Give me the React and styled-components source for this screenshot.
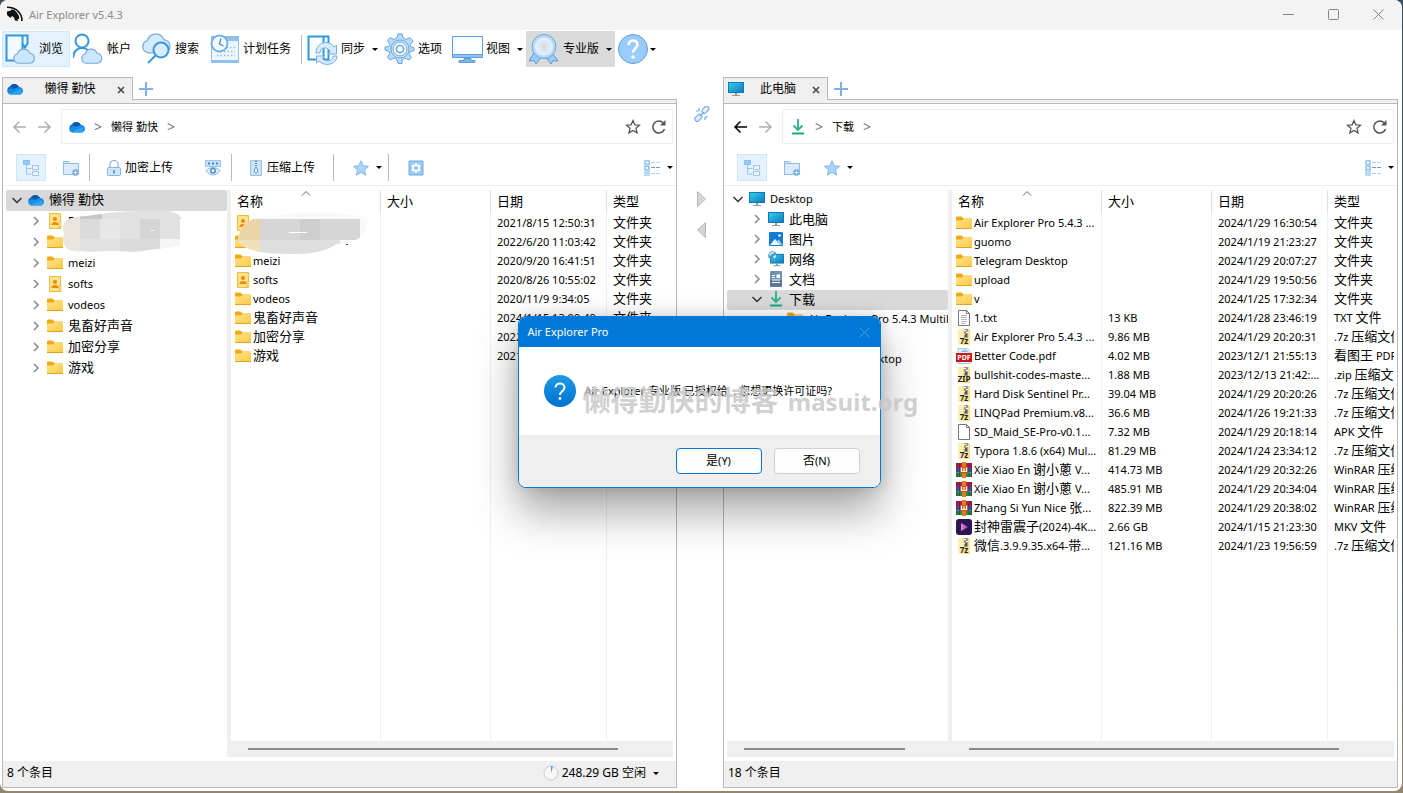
/* eslint-disable react/prop-types */
import React from 'react';
import styled, { createGlobalStyle, css } from 'styled-components';

const leftTree = [
  { name: '懒得 勤快', icon: 'cloud', depth: 0, open: true, active: true },
  { name: 'F', icon: 'shared', depth: 1 },
  { name: '', icon: 'folder', depth: 1 },
  { name: 'meizi', icon: 'folder', depth: 1 },
  { name: 'softs', icon: 'shared', depth: 1 },
  { name: 'vodeos', icon: 'folder', depth: 1 },
  { name: '鬼畜好声音', icon: 'folder', depth: 1 },
  { name: '加密分享', icon: 'folder', depth: 1 },
  { name: '游戏', icon: 'folder', depth: 1 }
];

const rightTree = [
  { name: 'Desktop', icon: 'monitor', depth: 0, open: true },
  { name: '此电脑', icon: 'monitor', depth: 1 },
  { name: '图片', icon: 'picture', depth: 1 },
  { name: '网络', icon: 'network', depth: 1 },
  { name: '文档', icon: 'document', depth: 1 },
  { name: '下载', icon: 'download', depth: 1, open: true, active: true },
  { name: 'Air Explorer Pro 5.4.3 Multilingual', icon: 'folder', depth: 2, leaf: true },
  { name: 'guomo', icon: 'folder', depth: 2, leaf: true },
  { name: 'Telegram Desktop', icon: 'folder', depth: 2, leaf: true }
];

const leftFiles = [
  ['shared', '', '', '2021/8/15 12:50:31', '文件夹'],
  ['folder', '', '', '2022/6/20 11:03:42', '文件夹'],
  ['folder', 'meizi', '', '2020/9/20 16:41:51', '文件夹'],
  ['shared', 'softs', '', '2020/8/26 10:55:02', '文件夹'],
  ['folder', 'vodeos', '', '2020/11/9 9:34:05', '文件夹'],
  ['folder', '鬼畜好声音', '', '2024/1/15 13:09:49', '文件夹'],
  ['folder', '加密分享', '', '2022/1/15 13:09:49', '文件夹'],
  ['folder', '游戏', '', '2021/1/15 13:09:49', '文件夹']
];

const rightFiles = [
  ['folder', 'Air Explorer Pro 5.4.3 ...', '', '2024/1/29 16:30:54', '文件夹'],
  ['folder', 'guomo', '', '2024/1/19 21:23:27', '文件夹'],
  ['folder', 'Telegram Desktop', '', '2024/1/29 20:07:27', '文件夹'],
  ['folder', 'upload', '', '2024/1/29 19:50:56', '文件夹'],
  ['folder', 'v', '', '2024/1/25 17:32:34', '文件夹'],
  ['text', '1.txt', '13 KB', '2024/1/28 23:46:19', 'TXT 文件'],
  ['seven', 'Air Explorer Pro 5.4.3 ...', '9.86 MB', '2024/1/29 20:20:31', '.7z 压缩文件'],
  ['pdf', 'Better Code.pdf', '4.02 MB', '2023/12/1 21:55:13', '看图王 PDF 文件'],
  ['zip', 'bullshit-codes-maste...', '1.88 MB', '2023/12/13 21:42:...', '.zip 压缩文件'],
  ['seven', 'Hard Disk Sentinel Pr...', '39.04 MB', '2024/1/29 20:20:26', '.7z 压缩文件'],
  ['seven', 'LINQPad Premium.v8...', '36.6 MB', '2024/1/26 19:21:33', '.7z 压缩文件'],
  ['blank', 'SD_Maid_SE-Pro-v0.1...', '7.32 MB', '2024/1/29 20:18:14', 'APK 文件'],
  ['seven', 'Typora 1.8.6 (x64) Mul...', '81.29 MB', '2024/1/24 23:34:12', '.7z 压缩文件'],
  ['rar', 'Xie Xiao En 谢小蔥 V...', '414.73 MB', '2024/1/29 20:32:26', 'WinRAR 压缩文件'],
  ['rar', 'Xie Xiao En 谢小蔥 V...', '485.91 MB', '2024/1/29 20:34:04', 'WinRAR 压缩文件'],
  ['rar', 'Zhang Si Yun Nice 张...', '822.39 MB', '2024/1/29 20:38:02', 'WinRAR 压缩文件'],
  ['video', '封神雷震子(2024)-4K...', '2.66 GB', '2024/1/15 21:23:30', 'MKV 文件'],
  ['seven', '微信.3.9.9.35.x64-带...', '121.16 MB', '2024/1/23 19:56:59', '.7z 压缩文件']
];

const Archive = ({ label }) => (
  <>
    <path d="M2 0h12v16H2z" fill="#fbe08a" />
    <path d="M2 0h5v16H2z" fill="#fdeeb4" />
    <path d="M8 0h4v9H8z" fill="#9b9b93" />
    <path d="M8 1h2v1H8zM10 3h2v1h-2zM8 5h2v1H8z" fill="#fff" />
    <path d="M9 5h2v3H9z" fill="#555" />
    <text x="8" y="15" textAnchor="middle" fontSize="8" fontWeight="700" fill="#222">{label}</text>
  </>
);

const Sheet = ({ children }) => (
  <>
    <path d="M2.500.5h8l3 3v12h-11z" fill="#fff" stroke="#777" />
    <path d="M10.500.5v3h3" fill="none" stroke="#777" />
    {children}
  </>
);

const Monitor = () => (
  <>
    <path d="M0 1h16v11H0z" fill="#1177b8" />
    <path d="M1 2h14v9H1z" fill="url(#screen)" />
    <path d="M7 12h2v2H7zM4 14h8v1H4z" fill="#8d99a3" />
  </>
);

const glyphs = {
  cloud: (
    <>
      <path d="M4 13a4 4 0 01-.8-7.800A5 5 0 0112 6l-2 7z" fill="#0f6cc0" />
      <path d="M3.200 5.200A5 5 0 0112 6L8 8z" fill="#0b57ad" />
      <path d="M4 13.500C.8 13.500-.2 11 .8 9.200 2 7.300 4.500 7 6.500 8L12 6a3.800 3.800 0 014 3.800c0 2-1.500 3.700-3.300 3.700z" fill="#1a8ce4" />
      <path d="M3 13.300L13 8l2.500 3.500c-.5 1.300-1.500 2-2.800 2H4z" fill="#2aa5f0" />
    </>
  ),
  folder: (
    <>
      <path d="M0 3c0-1 .5-1.500 1.500-1.500h4L7.500 3.500H15c.7 0 1 .4 1 1V8H0z" fill="#efaa10" />
      <path d="M0 5.500h6L7.500 4H16v9.500H0z" fill="url(#paper)" />
      <path d="M0 13h16v1H0z" fill="#e2a41c" />
    </>
  ),
  shared: (
    <>
      <path d="M2.500.5h11v15h-11z" fill="#fce38a" stroke="#e8bd3a" />
      <path d="M12 9.500h2v5h-2z" fill="#fff0b0" stroke="#d9a520" strokeWidth=".6" />
      <circle cx="8" cy="6" r="2.100" fill="#ef8a10" />
      <path d="M4.300 12c0-4 7.400-4 7.400 0z" fill="#ef8a10" />
    </>
  ),
  monitor: <Monitor />,
  network: (
    <>
      <g transform="translate(2 2) scale(.88)"><Monitor /></g>
      <circle cx="4.500" cy="4.500" r="4.300" fill="#3e9ad0" />
      <path d="M1 3c2-2 4-2.500 5-2 .5 1-1 2-2 2s-1 2-2 2zM5 5l3-1v2L6 8z" fill="#cfe9f7" />
    </>
  ),
  picture: (
    <>
      <rect x="1" y="1" width="14" height="14" rx="1" fill="#167ad0" />
      <path d="M2 14l5-6 5 6z" fill="#fff" />
      <path d="M9 10l1.500-1.500L14 13v1h-2z" fill="#9fd0f5" />
      <circle cx="11.500" cy="4.500" r="1.300" fill="#fff" />
    </>
  ),
  document: (
    <>
      <rect x="2" y="0" width="12" height="16" rx="1" fill="#7390ad" />
      <path d="M2 9h12v6.500H2z" fill="#59789a" />
      <path d="M4 4h3v1H4zM4 6h3v1H4zM8.500 3.500H12V7H8.500zM4 8.500h8v1H4zM4 11h8v1H4z" fill="#fff" />
    </>
  ),
  download: (
    <>
      <path d="M8 0v11M3.500 6.500L8 11l4.500-4.500" fill="none" stroke="#25b28c" strokeWidth="1.800" />
      <path d="M2 13.500h12v2H2z" fill="#18a884" />
    </>
  ),
  text: <Sheet><path d="M5 5.500h6M5 7.500h6M5 9.500h6M5 11.500h6M5 13.500h4" stroke="#aaa" strokeWidth=".8" /></Sheet>,
  blank: <Sheet />,
  seven: <Archive label="7z" />,
  zip: <Archive label="ZIP" />,
  pdf: (
    <>
      <path d="M2 .5h9l3 3v12H2z" fill="#e5f2fb" stroke="#8db7d3" strokeWidth=".8" />
      <path d="M5 4c2-3 6-3 7 0z" fill="#84c2e8" />
      <rect x="0" y="5" width="16" height="9" fill="#c4161c" />
      <text x="8" y="12" textAnchor="middle" fontSize="7" fontWeight="700" fill="#fff">PDF</text>
    </>
  ),
  rar: (
    <>
      <path d="M0 1h16v5H0z" fill="#b51f3f" />
      <path d="M0 6h16v4.500H0z" fill="#4a51b0" />
      <path d="M0 10.500h16V15H0z" fill="#2a8b46" />
      <path d="M1 1v14M3.500 1v14M13 1v14M15.500 1v14" stroke="#211b30" strokeWidth=".5" />
      <path d="M6 0h4v16H6z" fill="#e37a20" />
      <path d="M4 5h8v6H4z" fill="#c25318" />
      <path d="M5.500 5.500v4h5v-4M8 6v3.500" fill="none" stroke="#fff" strokeWidth="1.200" />
    </>
  ),
  video: (
    <>
      <rect width="16" height="16" rx="3" fill="#2c1650" />
      <path d="M5 4l7 4-7 4z" fill="url(#play)" />
    </>
  ),
  treeView: (
    <g fill="none" stroke="#9cc5e8">
      <path d="M3.500 5v9h5M3.500 8.500h5" />
      <path d="M.5.500h6v4h-6z" fill="#93c8f8" stroke="#8abdec" />
      <path d="M9.500 5.500h6v4h-6zM9.500 11.500h6v4h-6z" fill="#eef6fe" />
    </g>
  ),
  newFolder: (
    <g stroke="#8bbbe6">
      <path d="M.5 1.500h5l1.500 2h8.500v11H.5z" fill="#d9ecfd" />
      <path d="M.5 3.500H7" />
      <circle cx="12.500" cy="12.500" r="3" fill="#5ba3e3" stroke="#8bbbe6" />
      <path d="M10.500 12.500h4M12.500 10.500v4" stroke="#fff" />
    </g>
  ),
  lock: (
    <g fill="none" stroke="#86b4df">
      <path d="M4 7V4.500a4 4 0 018 0V7" strokeWidth="1.200" />
      <rect x="1.500" y="7.500" width="13" height="8" rx="1" fill="#cfe6fb" />
      <path d="M8 10v3.500" stroke="#4485c4" strokeWidth="1.500" />
    </g>
  ),
  eye: (
    <>
      <rect x=".5" y=".5" width="15" height="6" fill="#c6e1f9" stroke="#9cc5e8" />
      <path d="M3 2.500h2v2H3zM7 2.500h2v2H7zM11 2.500h2v2h-2z" fill="#3f83c4" />
      <path d="M1 10.500c4-4 10-4 14 0-3 6-11 6-14 0z" fill="#dceefd" stroke="#8bbbe6" />
      <circle cx="8" cy="10.800" r="2.200" fill="#fff" stroke="#4a8ccc" strokeWidth="1.500" />
    </>
  ),
  zipper: (
    <>
      <path d="M2.500.5h11v15h-11z" fill="#cbe4fa" stroke="#98c2e8" />
      <path d="M8 1v8" stroke="#5b98d0" strokeWidth="2" strokeDasharray="1 1" />
      <rect x="6.500" y="8" width="3" height="5" rx="1.500" fill="#fff" stroke="#5b98d0" />
    </>
  ),
  starBlue: <path d="M8 .8l2.200 5 5.300.5-4 3.600 1.200 5.300L8 12.400l-4.700 2.800 1.200-5.300-4-3.600 5.300-.5z" fill="#a9d4fc" stroke="#82b5e8" />,
  gearBox: (
    <>
      <path d="M1 1h14v14H1z" fill="#9ccbf6" stroke="#70a9de" />
      <circle cx="8" cy="8" r="3" fill="none" stroke="#fff" strokeWidth="1.600" />
      <path d="M8 3v2M8 11v2M3.700 5.500l1.700 1M10.600 9.500l1.700 1M3.700 10.500l1.700-1M10.600 6.500l1.700-1" stroke="#fff" strokeWidth="1.600" />
    </>
  ),
  details: (
    <>
      <path d="M0 0h6v16H0z" fill="#b8daf8" />
      <path d="M1 1h4v3H1zM1.500 6.500h3v3h-3z" fill="#fff" stroke="#7caedd" strokeWidth=".8" />
      <path d="M7 2.500h4M12 2.500h4M7 13.500h4M12 13.500h4" stroke="#b6d0e8" />
      <path d="M7 7.500h4M12 7.500h4" stroke="#659ccd" />
    </>
  ),
  back: <path d="M14 8H2M7.500 2.500L2 8l5.500 5.500" fill="none" stroke="currentColor" strokeWidth="1.500" />,
  forward: <path d="M2 8h12M8.500 2.500L14 8l-5.500 5.500" fill="none" stroke="currentColor" strokeWidth="1.500" />,
  star: <path d="M8 1.500l1.900 4.300 4.700.4-3.600 3.100 1.100 4.600L8 11.500l-4.100 2.400L5 9.300 1.400 6.200l4.700-.4z" fill="none" stroke="#555" strokeWidth="1.300" />,
  refresh: (
    <>
      <path d="M13.500 10A6 6 0 1112.300 4" fill="none" stroke="#555" strokeWidth="1.600" />
      <path d="M14.500 1v5.500H9z" fill="#555" />
    </>
  ),
  link: (
    <g fill="#e3f1fe" stroke="#79ace0" strokeWidth="1.200">
      <rect x="7.500" y="1.500" width="8" height="4.600" rx="2.300" transform="rotate(-45 11.500 4)" />
      <rect x=".5" y="9.500" width="8" height="4.600" rx="2.300" transform="rotate(-45 4.500 12)" />
      <path d="M6 10l4-4M5 2v3M2 5h3M11 11v3M11 11h3" />
    </g>
  )
};

const cloudPath = 'M7 15a5 5 0 01-.5-9.700A6.500 6.500 0 0119 4.500 5.300 5.300 0 0119.500 15z';

const bigGlyphs = {
  browse: (
    <>
      <path d="M1.500 2.500h16v25h-16zM17.500 2.500h5v8l-2.500 4-2.500-4z" fill="#f3f9ff" stroke="#3297dc" strokeWidth="2" />
      <path d={cloudPath} transform="translate(6 16) scale(.98 .95)" fill="#cde6fc" stroke="#77aede" strokeWidth="1.200" />
    </>
  ),
  account: (
    <>
      <circle cx="9" cy="8" r="6.500" fill="none" stroke="#3297dc" strokeWidth="2" />
      <path d="M0 25c0-6 4-10 9-10s6 2 7 4" fill="none" stroke="#3297dc" strokeWidth="2" />
      <path d={cloudPath} transform="translate(6 16) scale(.95)" fill="#cde6fc" stroke="#77aede" strokeWidth="1.200" />
    </>
  ),
  search: (
    <>
      <path d={cloudPath} transform="translate(-2 1) scale(1.300 1.250)" fill="#d4eafd" stroke="#77aede" />
      <circle cx="20" cy="17" r="7.500" fill="#d8ecfe" stroke="#3c98dc" strokeWidth="2" />
      <path d="M14.500 22.500L7 30" stroke="#3c98dc" strokeWidth="2" />
    </>
  ),
  schedule: (
    <>
      <rect x="2.500" y="3.500" width="27" height="26" rx="1" fill="#edf6fe" stroke="#90bfe8" />
      <path d="M2 3h28v5H2zM2 27h28v3H2z" fill="#8fc0ee" />
      <path d="M14 14.500h12M8 18.500h18M8 22.500h18" stroke="#8fbce6" strokeWidth="1.500" strokeDasharray="1.500 2" />
      <circle cx="10.500" cy="10.500" r="8" fill="#f5faff" stroke="#76aee3" strokeWidth="2" />
      <path d="M12 5.500L10.500 11l4 2" fill="none" stroke="#3d8fd4" strokeWidth="1.300" />
    </>
  ),
  // the two arrows turn in front of the notebook
  sync: (
    <>
      <path d="M1.500 3.500h20v23h-20zM16.500 3.500v23" fill="#f8fcff" stroke="#3297dc" strokeWidth="2" />
      <g fill="#d7ebfd" stroke="#76aee0" strokeLinejoin="round">
        <path d="M9 20c0-11 13-14 18-6l2.500-1.500V21H21l2.500-2.500C20 13 13 14 13 20z" />
        <path d="M30 23c0 9-13 11-18 5l-2.500 2v-7H18l-3 2.500c4 4 11 3 11-2.500z" />
      </g>
    </>
  ),
  options: (
    <g stroke="#66a5dc">
      <path d="M14 1h4l1 4 3 1.500 4-2 3 3.500-3 4 1 2 3 .5v3l-4 1.500-1 2 2.500 3.500L25 27l-4-2-2.500 1.500-.5 4h-4l-1-4L10 25l-4 2-2.500-3L6 20.500l-1-2L1 17v-3l4-.5 1-2-2.500-4L6 4.500l4 2L13 5z" fill="#b9dcfa" />
      <circle cx="16" cy="16" r="9" fill="#d8ecfd" />
      <circle cx="16" cy="16" r="7" fill="#eff7ff" />
      <circle cx="16" cy="16" r="3.500" fill="#fff" strokeWidth="1.500" />
    </g>
  ),
  view: (
    <>
      <path d="M.5 3.500h30v21H.5z" fill="#fbfdff" stroke="#5f9ed8" />
      <path d="M.5 21.500h30v3H.5z" fill="#8ec3f5" stroke="#5f9ed8" />
      <path d="M12 25.500h7v2h4v2H7v-2h5z" fill="#7db6ec" stroke="#5f9ed8" />
    </>
  ),
  pro: (
    <>
      <path d="M6 18L0 28l5-.5L7 31l6-8zM22 18l7 10-5-.5L22 31l-6-8z" fill="#9acaf6" stroke="#5c9cd8" />
      <circle cx="15" cy="13.500" r="12" fill="#b7dcfb" stroke="#68a6de" />
      <circle cx="15" cy="13.500" r="9.500" fill="url(#medal)" stroke="#9fc9ee" strokeWidth=".5" />
    </>
  ),
  help: (
    <>
      <circle cx="15" cy="16" r="14.500" fill="#99cbfb" stroke="#639fd9" />
      <path d="M10.500 12c0-6 9-6 9-.5 0 4-4.500 4-4.500 8" fill="none" stroke="#fff" strokeWidth="2.500" />
      <circle cx="15" cy="24" r="1.800" fill="#fff" />
    </>
  )
};

const Icon = ({ name }) => <svg width="16" height="16" viewBox="0 0 16 16" aria-hidden="true">{glyphs[name]}</svg>;
const BigIcon = ({ name }) => <svg width="32" height="32" viewBox="0 0 32 32" aria-hidden="true">{bigGlyphs[name]}</svg>;
const Chevron = ({ open }) => (
  <svg width="12" height="12" viewBox="0 0 12 12" fill="none" stroke={open ? '#333' : '#888'} strokeWidth="1.500" aria-hidden="true">
    <path d={open ? 'M1.500 4L6 8.500 10.500 4' : 'M4 2l4 4-4 4'} />
  </svg>
);

const Gradients = () => (
  <Defs aria-hidden="true">
    <defs>
      <linearGradient id="paper" x1="0" y1="0" x2="1" y2="1"><stop stopColor="#ffe28c" /><stop offset="1" stopColor="#fccb45" /></linearGradient>
      <linearGradient id="screen" x1="0" y1="0" x2="1" y2="1"><stop stopColor="#2fd0e4" /><stop offset="1" stopColor="#1279c4" /></linearGradient>
      <linearGradient id="play"><stop stopColor="#f57fc0" /><stop offset="1" stopColor="#7d4df0" /></linearGradient>
      <linearGradient id="ask" x1="0" y1="0" x2="0" y2="1"><stop stopColor="#1c9be6" /><stop offset="1" stopColor="#0071d0" /></linearGradient>
      <radialGradient id="medal"><stop stopColor="#d5dce2" /><stop offset="1" stopColor="#e6f3ff" /></radialGradient>
    </defs>
  </Defs>
);

// Chinese runs are set larger than the latin text next to them
const Mixed = ({ size = 13, children }) =>
  children.split(/([\u3400-\u9fff]+)/).map((run, i) => (i % 2 ? <Han key={i} $size={size}>{run}</Han> : run));

const MainItem = ({ icon, label, menu, tone }) => (
  <MainButton $menu={menu} $tone={tone}>
    <BigIcon name={icon} />
    <span>{label}</span>
    {menu && <Caret />}
  </MainButton>
);

const Tree = ({ rows, rowHeight }) => (
  <TreeList role="tree">
    {rows.map((row, i) => (
      <TreeRow key={i} role="treeitem" $height={rowHeight} $depth={row.depth} $active={row.active}>
        <Toggle aria-label="展开">{!row.leaf && <Chevron open={row.open} />}</Toggle>
        <Icon name={row.icon} />
        <TreeLabel><Mixed>{row.name}</Mixed></TreeLabel>
      </TreeRow>
    ))}
  </TreeList>
);

const FileTable = ({ rows }) => (
  <Table>
    <colgroup><col width="150" /><col width="110" /><col width="116" /><col /></colgroup>
    <thead>
      <tr>
        <th>
          名称
          <SortMark viewBox="0 0 10 5"><path d="M1 4.500l4-4 4 4" fill="none" stroke="#666" /></SortMark>
        </th>
        <th>大小</th>
        <th>日期</th>
        <th>类型</th>
      </tr>
    </thead>
    <tbody>
      {rows.map(([icon, name, size, date, type], i) => (
        <tr key={i}>
          <td><FileName><Icon name={icon} /><span><Mixed>{name}</Mixed></span></FileName></td>
          <td>{size}</td>
          <td>{date}</td>
          <td><Mixed>{type}</Mixed></td>
        </tr>
      ))}
    </tbody>
  </Table>
);

const PathBar = ({ icon, label, canGoBack }) => (
  <NavRow>
    <NavButton aria-label="后退" $enabled={canGoBack}><Icon name="back" /></NavButton>
    <NavButton aria-label="前进"><Icon name="forward" /></NavButton>
    <Address>
      <Icon name={icon} />
      <Crumb>&gt;</Crumb>
      <CrumbButton>{label}</CrumbButton>
      <Crumb>&gt;</Crumb>
      <Spacer />
      <NavButton aria-label="收藏"><Icon name="star" /></NavButton>
      <NavButton aria-label="刷新"><Icon name="refresh" /></NavButton>
    </Address>
  </NavRow>
);

const Tabs = ({ icon, label, width }) => (
  <TabRow>
    <Tab $width={width}>
      <Icon name={icon} />
      <span>{label}</span>
      <TabClose aria-label="关闭">
        <svg width="8" height="8" viewBox="0 0 8 8" stroke="#444" strokeWidth="1.500"><path d="M1 1l6 6M7 1L1 7" /></svg>
      </TabClose>
    </Tab>
    <AddTab aria-label="新建标签">
      <svg width="14" height="14" viewBox="0 0 14 14" stroke="#7eb0e2" strokeWidth="2"><path d="M7 0v14M0 7h14" /></svg>
    </AddTab>
  </TabRow>
);

const ViewMenu = () => (
  <ToolButton aria-label="视图" $end={3} $wide><Icon name="details" /><Caret /></ToolButton>
);

const TreeMask = () => (
  <TreeSmear width="122" height="44" viewBox="0 0 122 44" aria-hidden="true">
    <clipPath id="treeMask"><path d="M3 12C8 6 20 7 32 5s40-5 66-4c12-1 18 2 22 8h-2v26c-12 3-24 4-32 5-10 3-30 1-40 1-14 1-30 1-38-1C1 37 1 29 2 24c0-4-2-8 1-12z" /></clipPath>
    <g clipPath="url(#treeMask)">
      <path d="M0 0h122v44H0z" fill="#e2e1e1" />
      <path d="M0 0h18v44H0z" fill="#e9e5dd" />
      <path d="M38 9h20v20H38z" fill="#e8e7e8" />
      <path d="M18 9h20v20H18zM58 29h40v14H58z" fill="#dcdbdb" />
      <path d="M78 9h20v20H78z" fill="#d6d5d5" />
      <path d="M18 0h22v9H18z" fill="#c9c8c8" />
      <path d="M98 29h24v14H98z" fill="#f6f6f6" />
      <path d="M89 20h3v1h-3z" fill="#fff" />
    </g>
  </TreeSmear>
);

const ListMask = () => (
  <ListSmear width="132" height="44" viewBox="0 0 132 44" aria-hidden="true">
    <clipPath id="listMask"><path d="M3 19C7 9 14 5 28 4l30-4c20-1 50 0 65 3 6 1 9 5 7 12-3 11-15 14-30 16-12 7-20 9-38 10-20 0-38 0-52-6C2 31-1 27 3 19z" /></clipPath>
    <g clipPath="url(#listMask)">
      <path d="M0 0h132v44H0z" fill="#f8f9f9" />
      <path d="M0 6h23v22H0z" fill="#ead4a8" />
      <path d="M0 27h23v17H0z" fill="#f1dfb9" />
      <path d="M23 6h100v21H23z" fill="#d7d6d7" />
      <path d="M63 6h20v21H63z" fill="#d0cfd0" />
      <path d="M23 27h80v17H23z" fill="#dfdede" />
      <path d="M52 19h18v1H52z" fill="#fff" />
    </g>
    <path d="M109 31h2v1h-2z" fill="#722" />
  </ListSmear>
);

const App = () => (
  <Desktop>
    <GlobalStyle />
    <Gradients />
    <Window>
      <TitleBar>
        <svg width="16" height="16" viewBox="0 0 16 16" aria-hidden="true">
          <path d="M0 1.200C9 1 15 7 15 15" fill="none" stroke="#111" strokeWidth="1.600" />
          <path d="M4 4.500c4 .5 7 4 7 8.500" fill="none" stroke="#111" strokeWidth="2.500" />
          <path d="M0 5.500l8-2-1 3 3 3 1 5.500-3-.5-1-3-2-1.500-1.500 2L0 9z" fill="#111" />
        </svg>
        <h1>Air Explorer v5.4.3</h1>
        <WindowButton aria-label="最小化"><svg width="11" height="11" viewBox="0 0 11 11"><path d="M0 5.500h11" /></svg></WindowButton>
        <WindowButton aria-label="最大化"><svg width="11" height="11" viewBox="0 0 11 11"><rect x=".5" y=".5" width="10" height="10" rx="1" /></svg></WindowButton>
        <WindowButton aria-label="关闭"><svg width="11" height="11" viewBox="0 0 11 11"><path d="M.5.500l10 10M10.500.500l-10 10" /></svg></WindowButton>
      </TitleBar>

      <MainToolbar>
        <MainItem icon="browse" label="浏览" tone="blue" />
        <MainItem icon="account" label="帐户" />
        <MainItem icon="search" label="搜索" />
        <MainItem icon="schedule" label="计划任务" />
        <MainDivider />
        <MainItem icon="sync" label="同步" menu />
        <MainItem icon="options" label="选项" />
        <MainItem icon="view" label="视图" menu />
        <MainItem icon="pro" label="专业版" menu tone="grey" />
        <HelpButton aria-label="帮助"><BigIcon name="help" /><Caret /></HelpButton>
      </MainToolbar>

      <Panes>
        <Pane>
          <Tabs icon="cloud" label="懒得 勤快" width={131} />
          <Panel>
            <Band />
            <PathBar icon="cloud" label="懒得 勤快" />
            <Toolbar>
              <TreeButton aria-label="树"><Icon name="treeView" /></TreeButton>
              <ToolButton aria-label="新建文件夹" $start={17} $end={10}><Icon name="newFolder" /></ToolButton>
              <Divider />
              <ToolButton $end={16}><Icon name="lock" />加密上传</ToolButton>
              <ToolButton aria-label="查看" $end={10}><Icon name="eye" /></ToolButton>
              <Divider />
              <ToolButton $end={18}><Icon name="zipper" />压缩上传</ToolButton>
              <Divider />
              <ToolButton aria-label="收藏夹" $start={19} $end={6} $wide><Icon name="starBlue" /><Caret /></ToolButton>
              <Divider />
              <ToolButton aria-label="设置" $start={19}><Icon name="gearBox" /></ToolButton>
              <Spacer />
              <ViewMenu />
            </Toolbar>
            <Body>
              <Side>
                <Tree rows={leftTree} rowHeight={21} />
                <TreeMask />
              </Side>
              <Splitter />
              <Files>
                <FileTable rows={leftFiles} />
                <Scroll><Thumb $width={87} /></Scroll>
                <ListMask />
              </Files>
            </Body>
            <Status>
              <span>8 个条目</span>
              <Spacer />
              <SpaceButton>
                <svg width="16" height="16" viewBox="0 0 16 16"><circle cx="8" cy="8" r="7" fill="#f6f6f6" stroke="#ccc" /><path d="M8 8V1l2 .4z" fill="#4d9be0" /></svg>
                <span>248.29 GB 空闲</span>
                <Caret />
              </SpaceButton>
            </Status>
          </Panel>
        </Pane>

        <Middle>
          <Icon name="link" />
          <Transfers>
            <CopyButton aria-label="复制到右侧"><svg width="10" height="16" viewBox="0 0 10 16"><path d="M.5.500l8 7.500-8 7.500z" /></svg></CopyButton>
            <CopyButton aria-label="复制到左侧"><svg width="10" height="16" viewBox="0 0 10 16"><path d="M8.500.500L.5 8l8 7.500z" /></svg></CopyButton>
          </Transfers>
        </Middle>

        <Pane>
          <Tabs icon="monitor" label="此电脑" width={105} />
          <Panel>
            <Band />
            <PathBar icon="download" label="下载" canGoBack />
            <Toolbar>
              <TreeButton aria-label="树"><Icon name="treeView" /></TreeButton>
              <ToolButton aria-label="新建文件夹" $start={17} $end={8}><Icon name="newFolder" /></ToolButton>
              <ToolButton aria-label="收藏夹" $wide><Icon name="starBlue" /><Caret /></ToolButton>
              <Spacer />
              <ViewMenu />
            </Toolbar>
            <Body>
              <Side>
                <Tree rows={rightTree} rowHeight={20} />
                <Scroll><Thumb $width={79} /></Scroll>
              </Side>
              <Splitter />
              <Files>
                <FileTable rows={rightFiles} />
                <Scroll><Thumb $width={87} /></Scroll>
              </Files>
            </Body>
            <Status><span>18 个条目</span></Status>
          </Panel>
        </Pane>
      </Panes>
    </Window>

    <Dialog role="dialog" aria-labelledby="dialog-title">
      <DialogTitle>
        <h2 id="dialog-title">Air Explorer Pro</h2>
        <DialogClose aria-label="关闭"><svg width="11" height="11" viewBox="0 0 11 11"><path d="M.5.500l10 10M10.500.500l-10 10" stroke="#4da0e2" /></svg></DialogClose>
      </DialogTitle>
      <DialogBody>
        <svg width="32" height="32" viewBox="0 0 32 32" aria-hidden="true">
          <circle cx="16" cy="16" r="16" fill="url(#ask)" />
          <path d="M11.500 12.500c0-5.500 9-5.500 9 0 0 3.500-4.500 3.500-4.500 7.500" fill="none" stroke="#fff" strokeWidth="2" />
          <circle cx="16" cy="23.500" r="1.400" fill="#fff" />
        </svg>
        <p>Air Explorer 专业版 已授权给 &nbsp;, 您想更换许可证吗?</p>
      </DialogBody>
      <DialogFooter>
        <DialogButton $primary><Mixed size={12}>是(Y)</Mixed></DialogButton>
        <DialogButton><Mixed size={12}>否(N)</Mixed></DialogButton>
      </DialogFooter>
    </Dialog>
    <Watermark>懒得勤快的博客 <span>masuit.org</span></Watermark>
  </Desktop>
);

const GlobalStyle = createGlobalStyle`
  * {
    box-sizing: border-box;
  }
  body {
    margin: 0;
    font-family: "Noto Sans", "Noto Sans CJK SC", sans-serif;
    font-size: 11px;
    line-height: 16px;
    color: #000;
  }
  button {
    font: inherit;
    color: inherit;
    background: none;
    border: none;
    padding: 0;
  }
  svg {
    display: block;
    flex: none;
  }
`;

const Desktop = styled.div`
  position: relative;
  display: flex;
  min-height: 100vh;
  padding: 0 1px 2px 0;
  overflow: hidden;
  background: linear-gradient(#3b5264 70%, #94866f);
`;

const Defs = styled.svg`
  position: absolute;
  width: 0;
  height: 0;
`;

const Window = styled.main`
  flex: 1;
  min-width: 0;
  display: flex;
  flex-direction: column;
  background: #fff;
  border-radius: 8px;
  overflow: hidden;
`;

const TitleBar = styled.header`
  display: flex;
  align-items: center;
  height: 30px;
  padding: 0 1px 2px 7px;
  background: #f3f3f3;
  color: #8b8b8b;
  & h1 {
    flex: 1;
    margin: 2px 0 0 6px;
    font-size: 11px;
    font-weight: 400;
  }
`;

const WindowButton = styled.button`
  display: flex;
  justify-content: center;
  width: 45px;
  & svg {
    fill: none;
    stroke: #858585;
  }
`;

const MainToolbar = styled.nav`
  display: flex;
  align-items: center;
  height: 37px;
  padding: 1px 0 0 2px;
`;

const tones = {
  blue: css`
    background: #e4f2ff;
    box-shadow: inset 0 0 0 1px #cbe6fd;
  `,
  grey: css`
    background: #dadada;
  `
};

const MainButton = styled.button`
  display: flex;
  align-items: center;
  height: 36px;
  padding: 0 ${({ $menu }) => ($menu ? 3 : 7)}px 0 3px;
  font-size: 12px;
  white-space: nowrap;
  ${({ $tone }) => tones[$tone]}
  & span {
    margin-left: 2px;
  }
  & i {
    margin-left: 7px;
  }
`;

const HelpButton = styled(MainButton)`
  & i {
    margin-left: 0;
  }
`;

const Caret = styled.i`
  border: 3px solid transparent;
  border-top-color: #000;
  border-bottom: 0;
`;

const MainDivider = styled.div`
  width: 1px;
  height: 29px;
  margin: 0 2px 0 3px;
  background: #b8b8b8;
`;

const Panes = styled.div`
  flex: 1;
  display: flex;
  padding: 10px 4px 3px 2px;
`;

const Pane = styled.section`
  flex: 1;
  min-width: 0;
  display: flex;
  flex-direction: column;
`;

const TabRow = styled.div`
  display: flex;
  height: 22px;
`;

const Tab = styled.div`
  position: relative;
  z-index: 1;
  display: flex;
  align-items: center;
  width: ${({ $width }) => $width}px;
  height: 23px;
  padding: 0 7px 0 4px;
  background: #efefef;
  border: 1px solid #b9b9b9;
  border-bottom: 0;
  font-size: 12px;
  & span {
    flex: 1;
    text-align: center;
  }
`;

const TabClose = styled.button`
  padding-top: 2px;
`;

const AddTab = styled.button`
  padding: 1px 6px 0;
`;

const Panel = styled.div`
  flex: 1;
  display: flex;
  flex-direction: column;
  border: 1px solid #b9b9b9;
  background: #fff;
`;

const Band = styled.div`
  height: 4px;
  background: #efefef;
  border-bottom: 1px solid #b9b9b9;
`;

const NavRow = styled.div`
  display: flex;
  align-items: center;
  padding: 5px 3px 0 9px;
`;

const NavButton = styled.button`
  color: ${({ $enabled }) => ($enabled ? '#000' : '#b0b0b0')};
  margin-right: 8px;
`;

const Address = styled.div`
  flex: 1;
  display: flex;
  align-items: center;
  height: 35px;
  margin-left: 1px;
  padding: 0 5px 0 7px;
  border: 1px solid #eee;
  & ${NavButton} {
    margin: 0 0 0 10px;
  }
`;

const Crumb = styled.span`
  margin: 0 9px;
  color: #777;
  font-size: 14px;
`;

const CrumbButton = styled.button`
  white-space: nowrap;
`;

const Spacer = styled.div`
  flex: 1;
`;

const Toolbar = styled.div`
  display: flex;
  align-items: center;
  height: 42px;
  padding: 6px 0 0 13px;
  border-bottom: 1px solid #eee;
`;

const TreeButton = styled.button`
  display: flex;
  align-items: center;
  justify-content: center;
  width: 30px;
  height: 27px;
  background: #e4f2ff;
  border: 1px solid #cbe6fd;
`;

const ToolButton = styled.button`
  display: flex;
  align-items: center;
  gap: ${({ $wide }) => ($wide ? 7 : 3)}px;
  padding: 0 ${({ $end = 0 }) => $end}px 0 ${({ $start = 16 }) => $start}px;
  font-size: 12px;
  white-space: nowrap;
`;

const Divider = styled.div`
  width: 1px;
  height: 27px;
  background: #b8b8b8;
`;

const Body = styled.div`
  flex: 1;
  display: flex;
  padding: 4px 3px;
`;

const Side = styled.div`
  position: relative;
  width: 221px;
  flex: none;
  display: flex;
  flex-direction: column;
`;

const TreeList = styled.ul`
  flex: 1;
  margin: 0;
  padding: 0;
  list-style: none;
  overflow: hidden;
`;

const TreeRow = styled.li`
  display: flex;
  align-items: center;
  height: ${({ $height }) => $height}px;
  padding: 0 0 2px ${({ $depth }) => 5 + $depth * 19}px;
  background: ${({ $active }) => ($active ? '#d9d9d9' : 'none')};
  border-radius: 2px;
`;

const TreeLabel = styled.span`
  margin-left: 5px;
  white-space: nowrap;
`;

const Toggle = styled.button`
  flex: none;
  width: 12px;
  height: 12px;
  margin-right: 5px;
`;

const Splitter = styled.div`
  width: 4px;
  background: #efefef;
`;

const Files = styled.div`
  position: relative;
  flex: 1;
  min-width: 0;
  display: flex;
  flex-direction: column;
  overflow: hidden;
  background:
    linear-gradient(#e8f1fc, #e8f1fc) 149px 0 / 1px 100% no-repeat,
    linear-gradient(#e8f1fc, #e8f1fc) 259px 0 / 1px 100% no-repeat,
    linear-gradient(#e8f1fc, #e8f1fc) 375px 0 / 1px 100% no-repeat;
`;

const Table = styled.table`
  width: 100%;
  margin-bottom: auto;
  table-layout: fixed;
  border-collapse: separate;
  border-spacing: 0;
  & th {
    position: relative;
    height: 23px;
    padding: 0 6px 1px;
    font-size: 13px;
    font-weight: 400;
    text-align: left;
  }
  & th:not(:last-child) {
    border-right: 1px solid #e0e0e0;
  }
  & td {
    height: 19px;
    padding: 0 0 0 6px;
    line-height: 18px;
    white-space: nowrap;
    overflow: hidden;
  }
  & td:first-child {
    padding-left: 4px;
  }
`;

const SortMark = styled.svg`
  position: absolute;
  top: 1px;
  left: 70px;
  width: 10px;
  height: 5px;
`;

const FileName = styled.div`
  display: flex;
  align-items: center;
  gap: 2px;
  height: 19px;
`;

const Han = styled.span`
  font-size: ${({ $size }) => $size}px;
`;

const Scroll = styled.div`
  height: 16px;
  padding: 7px 0 0 17px;
  background: #efefef;
`;

const Thumb = styled.div`
  width: ${({ $width }) => $width}%;
  height: 2px;
  background: #8a8a8a;
`;

const TreeSmear = styled.svg`
  position: absolute;
  top: 20px;
  left: 56px;
`;

const ListSmear = styled.svg`
  position: absolute;
  top: 23px;
  left: 6px;
`;

const Status = styled.footer`
  display: flex;
  align-items: center;
  height: 26px;
  padding: 0 17px 2px 4px;
  background: #efefef;
  font-size: 12px;
`;

const SpaceButton = styled.button`
  display: flex;
  align-items: center;
  gap: 3px;
  & i {
    margin-left: 4px;
  }
`;

const Middle = styled.div`
  display: flex;
  flex-direction: column;
  align-items: center;
  gap: 69px;
  width: 46px;
  padding: 29px 0 0 4px;
`;

const Transfers = styled.div`
  display: flex;
  flex-direction: column;
  gap: 15px;
`;

const CopyButton = styled.button`
  & svg {
    fill: #d5d5d5;
    stroke: #b5b5b5;
  }
`;

const Dialog = styled.div`
  position: absolute;
  top: 316px;
  left: calc(50% - 184px);
  width: 363px;
  background: #fff;
  border: 1px solid #0078d7;
  border-radius: 8px;
  overflow: hidden;
  box-shadow: 0 24px 44px rgba(0, 0, 0, 0.35), 0 0 16px rgba(0, 0, 0, 0.15);
`;

const DialogTitle = styled.div`
  display: flex;
  align-items: center;
  height: 30px;
  padding: 0 10px 0 9px;
  background: #0078d7;
  color: #fff;
  & h2 {
    flex: 1;
    margin: 0;
    font-size: 11px;
    font-weight: 400;
  }
`;

const DialogClose = styled.button`
  display: flex;
`;

const DialogBody = styled.div`
  display: flex;
  align-items: center;
  height: 88px;
  padding-left: 25px;
  & p {
    margin: 0 0 0 9px;
    white-space: nowrap;
  }
`;

const DialogFooter = styled.div`
  display: flex;
  justify-content: flex-end;
  gap: 12px;
  padding: 13px 20px;
  background: #efefef;
`;

const DialogButton = styled.button`
  width: 86px;
  height: 26px;
  background: #fdfdfd;
  border: 1px solid ${({ $primary }) => ($primary ? '#0078d4' : '#d0d0d0')};
  border-radius: 4px;
`;

const Watermark = styled.div`
  position: absolute;
  top: 380px;
  left: calc(50% - 119px);
  color: rgba(200, 200, 200, 0.85);
  font-size: 28px;
  line-height: 40px;
  font-weight: 700;
  white-space: nowrap;
  pointer-events: none;
  & span {
    margin-left: 2px;
    font-size: 24px;
  }
`;

export default App;
